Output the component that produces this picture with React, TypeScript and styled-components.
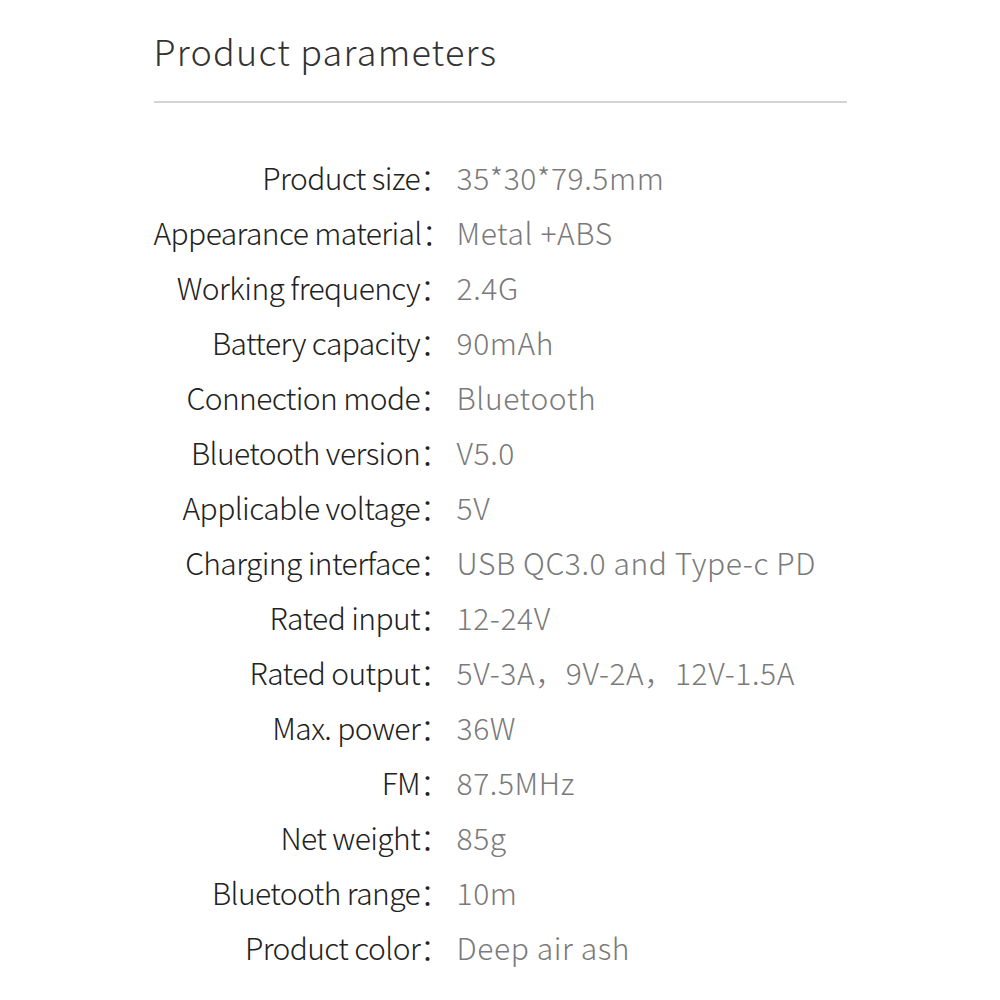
import React from "react";
import styled, { createGlobalStyle } from "styled-components";

const Global = createGlobalStyle`
  html, body { margin: 0; padding: 0; background: #fff; }
  body { font-family: "Noto Sans CJK SC", "Noto Sans", sans-serif; }
`;

const Page = styled.div`
  width: 1000px;
  height: 1000px;
  display: flex;
  justify-content: center;
  overflow: hidden;
`;

const Wrap = styled.div`
  width: 693px;
  padding-top: 24px;
`;

const Title = styled.h1`
  margin: 0;
  font-size: 36px;
  font-weight: 300;
  letter-spacing: 1.2px;
  color: #333;
  line-height: 52px;
`;

const Rule = styled.div`
  height: 2px;
  background: #d4d4d4;
  margin-top: 25px;
`;

const Table = styled.div`
  display: grid;
  grid-template-columns: 296px 1fr;
  margin-top: 47px;
`;

const Label = styled.div`
  text-align: right;
  font-size: 30px;
  font-weight: 300;
  color: #222;
  letter-spacing: -0.6px;
  line-height: 55px;
  white-space: nowrap;
`;

const Value = styled.div`
  padding-left: 7px;
  font-size: 30px;
  font-weight: 300;
  color: #7a7a7a;
  letter-spacing: 0.6px;
  line-height: 55px;
  white-space: nowrap;
`;

const rows: [string, string][] = [
  ["Product size", "35*30*79.5mm"],
  ["Appearance material", "Metal +ABS"],
  ["Working frequency", "2.4G"],
  ["Battery capacity", "90mAh"],
  ["Connection mode", "Bluetooth"],
  ["Bluetooth version", "V5.0"],
  ["Applicable voltage", "5V"],
  ["Charging interface", "USB QC3.0 and Type-c PD"],
  ["Rated input", "12-24V"],
  ["Rated output", "5V-3A，9V-2A，12V-1.5A"],
  ["Max. power", "36W"],
  ["FM", "87.5MHz"],
  ["Net weight", "85g"],
  ["Bluetooth range", "10m"],
  ["Product color", "Deep air ash"],
];

export default function App() {
  return (
    <Page>
      <Global />
      <Wrap>
        <Title>Product parameters</Title>
        <Rule />
        <Table>
          {rows.map(([k, v]) => (
            <React.Fragment key={k}>
              <Label>{k}：</Label>
              <Value>{v}</Value>
            </React.Fragment>
          ))}
        </Table>
      </Wrap>
    </Page>
  );
}
